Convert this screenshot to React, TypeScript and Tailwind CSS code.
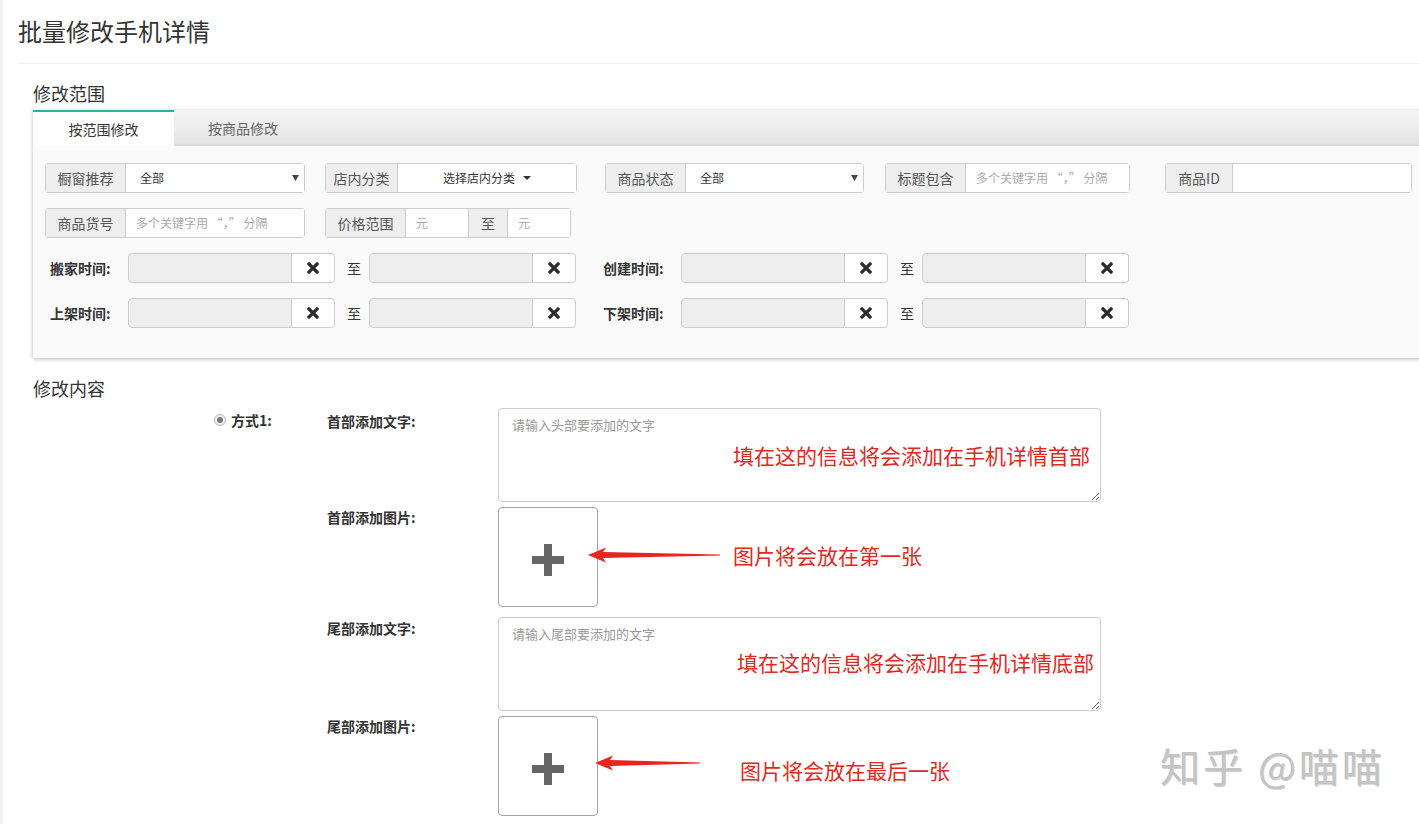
import React from "react";

const font = "font-['Noto_Sans_CJK_SC','Liberation_Sans',sans-serif]";

function Caret() {
  return (
    <svg width="7" height="6" viewBox="0 0 7 6" className="shrink-0">
      <path d="M0 0H7L3.5 6Z" fill="#444" />
    </svg>
  );
}

function XIcon() {
  return (
    <svg width="12" height="12" viewBox="0 0 12 12">
      <path d="M2 2L10 10M10 2L2 10" stroke="#2b2b2b" strokeWidth="3.2" strokeLinecap="square" />
    </svg>
  );
}

function Addon({ w, children }: { w: string; children: React.ReactNode }) {
  return (
    <div
      className={`${w} h-full shrink-0 flex items-center justify-center bg-[#eee] border border-[#ccc] text-[14px] text-[#555]`}
    >
      {children}
    </div>
  );
}

function Group({ className, children }: { className: string; children: React.ReactNode }) {
  return (
    <div className={`${className} h-[30px] flex rounded-[4px] overflow-hidden shadow-[inset_0_1px_1px_rgba(0,0,0,0.05)]`}>
      {children}
    </div>
  );
}

function SelectBox({ text }: { text: string }) {
  return (
    <div className="flex-1 h-full flex items-center justify-between pl-[14px] pr-[5px] bg-white border border-l-0 border-[#ccc] text-[12px] text-[#333]">
      <span>{text}</span>
      <Caret />
    </div>
  );
}

function TextBox({ placeholder, last = true }: { placeholder?: string; last?: boolean }) {
  return (
    <div
      className={`flex-1 h-full flex items-center pl-[10px] bg-white border border-l-0 border-[#ccc] text-[12px] text-[#aaa] whitespace-pre ${
        last ? "" : "border-r-0"
      }`}
    >
      {placeholder}
    </div>
  );
}

function DateField() {
  return (
    <div className="flex h-[30px] w-[207px] rounded-[4px] overflow-hidden">
      <div className="w-[164px] h-full bg-[#eee] border border-[#ccc] rounded-l-[4px]" />
      <div className="flex-1 h-full bg-white border border-l-0 border-[#ccc] rounded-r-[4px] flex items-center justify-center">
        <XIcon />
      </div>
    </div>
  );
}

function DateRow({ a, b }: { a: string; b: string }) {
  return (
    <div className="flex items-center h-[30px]">
      <div className="w-[78px] ml-[5px] text-[14px] font-bold text-[#333]">{a}:</div>
      <DateField />
      <span className="ml-[12px] mr-[8px] text-[14px] text-[#333]">至</span>
      <DateField />
      <div className="w-[78px] ml-[27px] text-[14px] font-bold text-[#333]">{b}:</div>
      <DateField />
      <span className="ml-[12px] mr-[8px] text-[14px] text-[#333]">至</span>
      <DateField />
    </div>
  );
}

function Arrow({ length }: { length: number }) {
  return (
    <svg width={length} height="16" viewBox={`0 0 ${length} 16`}>
      <polygon
        points={`0,8 18,0.5 15,5 ${length},7.6 ${length},8.6 15,11 18,15.5`}
        fill="#e8251f"
      />
    </svg>
  );
}

function UploadBox() {
  return (
    <div className="w-[100px] h-[100px] rounded-[4px] border border-[#a6a6a6] bg-white flex items-center justify-center">
      <svg width="32" height="32" viewBox="0 0 32 32" className="mt-[6px] -ml-[1px]">
        <path d="M12 0H20V12H32V20H20V32H12V20H0V12H12Z" fill="#666" />
      </svg>
    </div>
  );
}

function Note({ className, children }: { className: string; children: React.ReactNode }) {
  return (
    <div className={`absolute ${className} text-[21px] leading-[28px] text-[#e0281f] whitespace-nowrap`}>
      {children}
    </div>
  );
}

export default function App() {
  return (
    <div className={`relative w-[1419px] h-[824px] overflow-hidden bg-white ${font}`}>
      <div className="absolute left-0 top-0 bottom-0 w-[3px] bg-[#f1f1f1]" />

      <div className="ml-[18px] pt-[15px] pb-[16px] border-b border-[#eee]">
        <h1 className="text-[24px] leading-[32px] text-[#333]">批量修改手机详情</h1>
      </div>

      <div className="ml-[33px]">
        <div className="mt-[17px] text-[18px] leading-[24px] text-[#333]">修改范围</div>

        <div className="mt-[5px] mr-[-30px] shadow-[0_1px_4px_rgba(0,0,0,0.28)]">
          <div className="h-[36px] flex bg-linear-to-b from-[#f4f4f4] to-[#e3e3e3] shadow-[inset_0_-1px_2px_rgba(0,0,0,0.08)]">
            <div className="w-[141px] h-full bg-white border-t-2 border-[#35aca3] flex items-center justify-center text-[14px] text-[#333]">
              按范围修改
            </div>
            <div className="w-[138px] h-full flex items-center justify-center text-[14px] text-[#666]">
              按商品修改
            </div>
          </div>

          <div className="bg-[#fafafa] pt-[17px] pl-[12px] pb-[30px] flex flex-col gap-[15px]">
            <div className="flex">
              <Group className="w-[260px]">
                <Addon w="w-[81px]">橱窗推荐</Addon>
                <SelectBox text="全部" />
              </Group>
              <Group className="w-[252px] ml-[20px]">
                <Addon w="w-[73px]">店内分类</Addon>
                <div className="flex-1 h-full flex items-center justify-center gap-[8px] bg-white border border-l-0 border-[#ccc] text-[12px] text-[#333]">
                  <span>选择店内分类</span>
                  <span className="w-0 h-0 border-x-[4px] border-x-transparent border-t-[4px] border-t-[#333]" />
                </div>
              </Group>
              <Group className="w-[259px] ml-[28px]">
                <Addon w="w-[81px]">商品状态</Addon>
                <SelectBox text="全部" />
              </Group>
              <Group className="w-[245px] ml-[21px]">
                <Addon w="w-[81px]">标题包含</Addon>
                <TextBox placeholder="多个关键字用 “，” 分隔" />
              </Group>
              <Group className="w-[247px] ml-[35px]">
                <Addon w="w-[68px]">商品ID</Addon>
                <TextBox />
              </Group>
            </div>

            <div className="flex">
              <Group className="w-[260px]">
                <Addon w="w-[81px]">商品货号</Addon>
                <TextBox placeholder="多个关键字用 “，” 分隔" />
              </Group>
              <Group className="w-[246px] ml-[20px]">
                <Addon w="w-[81px]">价格范围</Addon>
                <TextBox placeholder="元" last={false} />
                <Addon w="w-[40px]">至</Addon>
                <TextBox placeholder="元" />
              </Group>
            </div>

            <DateRow a="搬家时间" b="创建时间" />
            <DateRow a="上架时间" b="下架时间" />
          </div>
        </div>

        <div className="mt-[18px] text-[18px] leading-[24px] text-[#333]">修改内容</div>

        <div className="mt-[8px] ml-[181px] flex">
          <div className="w-[113px] pt-[2px] flex items-start">
            <div className="h-[20px] flex items-center">
              <span className="w-[12px] h-[12px] rounded-full border border-[#b5b5b5] bg-[#efefef] flex items-center justify-center">
                <span className="w-[6px] h-[6px] rounded-full bg-[#777]" />
              </span>
              <span className="ml-[5px] text-[14px] font-bold text-[#333]">方式1:</span>
            </div>
          </div>

          <div className="flex flex-col">
            <div className="flex">
              <div className="w-[171px] pt-[3px] text-[14px] leading-[20px] font-bold text-[#333]">首部添加文字:</div>
              <div className="relative">
                <textarea
                  placeholder="请输入头部要添加的文字"
                  className="block w-[603px] h-[94px] px-[13px] py-[6px] text-[13px] leading-[20px] bg-white border border-[#ccc] rounded-[4px] placeholder:text-[#999] outline-none"
                />
                <Note className="left-[235px] top-[33px]">填在这的信息将会添加在手机详情首部</Note>
              </div>
            </div>

            <div className="flex mt-[5px]">
              <div className="w-[171px] text-[14px] leading-[20px] font-bold text-[#333]">首部添加图片:</div>
              <div className="relative">
                <UploadBox />
                <div className="absolute left-[90px] top-[40px]">
                  <Arrow length={132} />
                </div>
                <Note className="left-[235px] top-[34px]">图片将会放在第一张</Note>
              </div>
            </div>

            <div className="flex mt-[10px]">
              <div className="w-[171px] pt-[1px] text-[14px] leading-[20px] font-bold text-[#333]">尾部添加文字:</div>
              <div className="relative">
                <textarea
                  placeholder="请输入尾部要添加的文字"
                  className="block w-[603px] h-[94px] px-[13px] py-[6px] text-[13px] leading-[20px] bg-white border border-[#ccc] rounded-[4px] placeholder:text-[#999] outline-none"
                />
                <Note className="left-[239px] top-[31px]">填在这的信息将会添加在手机详情底部</Note>
              </div>
            </div>

            <div className="flex mt-[5px]">
              <div className="w-[171px] text-[14px] leading-[20px] font-bold text-[#333]">尾部添加图片:</div>
              <div className="relative">
                <UploadBox />
                <div className="absolute left-[97px] top-[39px]">
                  <Arrow length={105} />
                </div>
                <Note className="left-[242px] top-[40px]">图片将会放在最后一张</Note>
              </div>
            </div>
          </div>
        </div>
      </div>

      <div className="absolute left-[1160px] top-[740px] text-[40px] leading-[50px] text-[#c4c4c4] tracking-[3px] whitespace-nowrap [text-shadow:1px_1px_0_rgba(120,120,120,0.35)]">
        知乎 @喵喵
      </div>
    </div>
  );
}
